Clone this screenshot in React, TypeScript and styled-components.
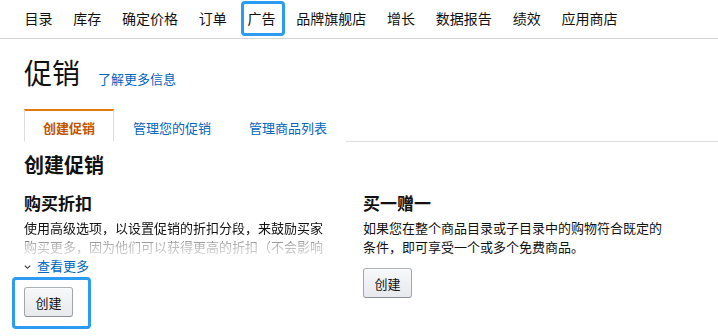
import styled, { createGlobalStyle } from "styled-components";

const GlobalStyle = createGlobalStyle`
  body {
    margin: 0;
    min-height: 336px;
    background: #fff;
    font-family: "Liberation Sans", Arial, "Noto Sans CJK SC", sans-serif;
    color: #111;
  }
`;

const NAV_ITEMS = ["目录", "库存", "确定价格", "订单", "广告", "品牌旗舰店", "增长", "数据报告", "绩效", "应用商店"];
const TABS = ["创建促销", "管理您的促销", "管理商品列表"];

interface NavItemProps {
  $marked?: boolean;
}

interface TabProps {
  $active?: boolean;
}

export default function App() {
  return (
    <>
      <GlobalStyle />
      <S.Nav>
        {NAV_ITEMS.map((item) => (
          <S.NavItem key={item} $marked={item === "广告"}>
            {item}
          </S.NavItem>
        ))}
      </S.Nav>

      <S.Header>
        <S.Title>促销</S.Title>
        <S.Link href="#">了解更多信息</S.Link>
      </S.Header>

      <S.Tabs>
        {TABS.map((tab, i) => (
          <S.Tab key={tab} $active={i === 0}>
            {tab}
          </S.Tab>
        ))}
      </S.Tabs>

      <S.Content>
        <S.Heading>创建促销</S.Heading>
        <S.Columns>
          <S.Column>
            <S.SubHeading>购买折扣</S.SubHeading>
            <S.Faded>
              使用高级选项，以设置促销的折扣分段，来鼓励买家购买更多，因为他们可以获得更高的折扣（不会影响您的利润）。
            </S.Faded>
            <S.More href="#">
              <S.Chevron viewBox="0 0 8 6" aria-hidden>
                <path d="M1 1.5 L4 4.5 L7 1.5" fill="none" stroke="#333" strokeWidth="1.3" />
              </S.Chevron>
              查看更多
            </S.More>
            <S.Marked>
              <S.Button>创建</S.Button>
            </S.Marked>
          </S.Column>
          <S.Column>
            <S.SubHeading>买一赠一</S.SubHeading>
            <S.Text>如果您在整个商品目录或子目录中的购物符合既定的条件，即可享受一个或多个免费商品。</S.Text>
            <S.ButtonRow>
              <S.Button>创建</S.Button>
            </S.ButtonRow>
          </S.Column>
        </S.Columns>
      </S.Content>
    </>
  );
}

const S = {
  Nav: styled.nav`
    display: flex;
    align-items: center;
    height: 39px;
    padding: 0 0 2px 14px;
    box-sizing: border-box;
    border-bottom: 1px solid #d5d5d5;
  `,

  NavItem: styled.span<NavItemProps>`
    position: relative;
    display: flex;
    align-items: center;
    height: 100%;
    padding: 0 10.4px;
    font-size: 14px;
    color: #111;

    &::after {
      content: "";
      display: ${(p) => (p.$marked ? "block" : "none")};
      position: absolute;
      top: 1px;
      bottom: 0;
      left: 4px;
      right: 1px;
      border: 3px solid #2b9cf2;
      border-radius: 4px;
    }
  `,

  Header: styled.div`
    display: flex;
    align-items: baseline;
    gap: 18px;
    padding: 19px 24px 0;
  `,

  Title: styled.h1`
    margin: 0;
    font-size: 28px;
    line-height: 34px;
    font-weight: 400;
  `,

  Link: styled.a`
    font-size: 13px;
    color: #0066c0;
    text-decoration: none;
  `,

  Tabs: styled.div`
    display: flex;
    margin: 17px 0 0 24px;
    border-bottom: 1px solid #ddd;
  `,

  Tab: styled.div<TabProps>`
    display: flex;
    align-items: center;
    height: 33px;
    padding: 2px 18px 0;
    box-sizing: border-box;
    margin-bottom: -1px;
    font-size: 13px;
    font-weight: ${(p) => (p.$active ? 700 : 400)};
    color: ${(p) => (p.$active ? "#c45500" : "#0066c0")};
    background: #fff;
    border: 1px solid ${(p) => (p.$active ? "#ddd" : "transparent")};
    border-top: 2px solid ${(p) => (p.$active ? "#e47911" : "transparent")};
    border-bottom: 1px solid ${(p) => (p.$active ? "#fff" : "transparent")};
  `,

  Content: styled.div`
    padding: 0 24px;
  `,

  Heading: styled.h2`
    margin: 12px 0 0;
    font-size: 20px;
    line-height: 24px;
    font-weight: 700;
  `,

  Columns: styled.div`
    display: grid;
    grid-template-columns: 305px 305px;
    column-gap: 34px;
    margin-top: 17px;
  `,

  Column: styled.div`
    display: flex;
    flex-direction: column;
    align-items: flex-start;
  `,

  SubHeading: styled.h3`
    margin: 0;
    font-size: 17px;
    line-height: 20px;
    font-weight: 700;
  `,

  Text: styled.p`
    margin: 4px 0 0;
    font-size: 13px;
    line-height: 19px;
  `,

  Faded: styled.p`
    margin: 4px 0 0;
    font-size: 13px;
    line-height: 19px;
    height: 38px;
    overflow: hidden;
    -webkit-mask-image: linear-gradient(to bottom, #000 0, #000 19px, rgba(0, 0, 0, 0.35) 24px, rgba(0, 0, 0, 0.15) 38px);
    mask-image: linear-gradient(to bottom, #000 0, #000 19px, rgba(0, 0, 0, 0.35) 24px, rgba(0, 0, 0, 0.15) 38px);
  `,

  More: styled.a`
    display: flex;
    align-items: center;
    gap: 6px;
    font-size: 13px;
    line-height: 19px;
    color: #0066c0;
    text-decoration: none;
  `,

  Chevron: styled.svg`
    width: 7px;
    height: 6px;
  `,

  Marked: styled.span`
    position: relative;
    margin-top: 11px;

    &::after {
      content: "";
      position: absolute;
      top: -10px;
      bottom: -12px;
      left: -12px;
      right: -18px;
      border: 3px solid #2b9cf2;
      border-radius: 4px;
    }
  `,

  ButtonRow: styled.div`
    margin-top: 11px;
  `,

  Button: styled.button`
    width: 49px;
    height: 30px;
    padding: 0;
    font-family: inherit;
    font-size: 13px;
    color: #111;
    background: linear-gradient(to bottom, #f7f8fa, #e7e9ec);
    border: 1px solid #adb1b8;
    border-color: #adb1b8 #a2a6ac #8d9096;
    border-radius: 3px;
    box-shadow: 0 1px 0 rgba(255, 255, 255, 0.6) inset;
  `,
};
